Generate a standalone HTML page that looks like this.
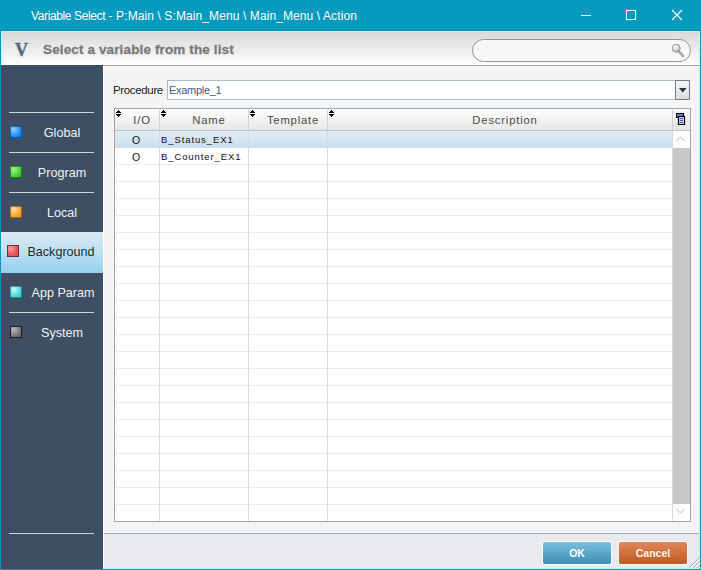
<!DOCTYPE html>
<html><head><meta charset="utf-8">
<style>
*{margin:0;padding:0;box-sizing:border-box}
html,body{width:701px;height:570px;overflow:hidden;background:#059abe;font-family:"Liberation Sans",sans-serif}
.a{position:absolute}
#title{left:0;top:0;width:701px;height:31px;background:#059abe}
#ttext{left:31px;top:9px;font-size:12px;letter-spacing:0.1px;color:#fff;white-space:pre;line-height:14px}
#win{left:1px;top:31px;width:699px;height:538px;background:#b0fbff}
#hdr{left:2px;top:32px;width:697px;height:33px;background:linear-gradient(#d9d9d9,#f9f9f9 88%,#fdfdfd)}
#hline{left:103px;top:65px;width:596px;height:1px;background:#a5a5a5}
#side{left:1px;top:65px;width:102px;height:504px;background:#3e4f63}
#content{left:103px;top:66px;width:596px;height:467px;background:#f5f5f5;border-left:1px solid #fff}
#band{left:103px;top:533px;width:596px;height:35px;border-left:1px solid #fff;background:#e9eaed;border-top:1px solid #a5adb5}
.sep{position:absolute;left:8px;width:85px;height:1px;background:#d0d6dc}
.ico{position:absolute;width:12px;height:12px}
.lbl{position:absolute;left:20px;width:82px;text-align:center;font-size:12.6px;color:#f0f2f4;white-space:pre;line-height:14px}
.dot{position:absolute;left:115px;width:557px;height:1px;background:repeating-linear-gradient(90deg,transparent 0 1px,#d6d6d6 1px 2px)}
.hsep{position:absolute;top:110px;width:1px;height:20px;background:#d0d0d0}
.bsep{position:absolute;top:131px;width:1px;height:390px;background:#dadada}
.sort{top:110px;width:5px;height:7px}
.hd{position:absolute;top:114px;padding-left:10px;font-size:11.3px;letter-spacing:0.8px;color:#4a4a4a;text-align:center;line-height:13px;white-space:pre}
.cell{position:absolute;font-size:9.5px;letter-spacing:0.9px;color:#101010;line-height:12px;white-space:pre}
.btn{position:absolute;top:542px;width:68px;height:22px;border-radius:2px;box-shadow:0 0 0 1px rgba(255,255,255,.75);font-size:10.5px;font-weight:bold;text-align:center;line-height:23px}
</style></head><body>
<div id="title" class="a"></div>
<div id="ttext" class="a"><span style="letter-spacing:-0.38px">Variable Select</span> - P:Main \ S:Main_Menu \ Main_Menu \ Action</div>
<!-- window controls -->
<div class="a" style="left:581px;top:15px;width:10px;height:1px;background:#fff"></div>
<div class="a" style="left:626px;top:10px;width:10px;height:10px;border:1px solid #fff"></div>
<svg class="a" style="left:671px;top:9px" width="12" height="12" viewBox="0 0 12 12"><path d="M1 1L11 11M11 1L1 11" stroke="#fff" stroke-width="1.1"/></svg>

<div class="a" style="left:1px;top:30px;width:699px;height:1px;background:#1688a6"></div>
<div id="win" class="a"></div>
<div id="hdr" class="a"></div>
<div class="a" style="left:15px;top:41px;font-family:'Liberation Serif',serif;font-weight:bold;font-size:18px;color:#56677e;-webkit-text-stroke:0.4px #56677e;line-height:18px">V</div>
<div class="a" style="left:43px;top:42px;font-size:13.5px;font-weight:bold;color:#7a7a7a;letter-spacing:0.13px;-webkit-text-stroke:0.3px #7a7a7a;white-space:pre;line-height:15px">Select a variable from the list</div>
<div class="a" style="left:472px;top:39px;width:219px;height:23px;border:1px solid #959595;border-radius:12px;background:#f7f7f7"></div>
<svg class="a" style="left:671px;top:43px" width="14" height="15" viewBox="0 0 14 15">
 <defs><radialGradient id="mg" cx="0.35" cy="0.3" r="0.75"><stop offset="0" stop-color="#ffffff"/><stop offset="0.6" stop-color="#d0d4d8"/><stop offset="1" stop-color="#a8a8a8"/></radialGradient></defs>
 <line x1="7.5" y1="8" x2="12" y2="12.8" stroke="#8c8c8c" stroke-width="2.4" stroke-linecap="round"/>
 <line x1="7.5" y1="8" x2="12" y2="12.8" stroke="#c8c8c8" stroke-width="1" stroke-linecap="round"/>
 <circle cx="5.2" cy="5.2" r="4" fill="url(#mg)" stroke="#909090" stroke-width="0.9"/>
</svg>
<div id="hline" class="a"></div>

<div id="side" class="a">
 <div class="sep" style="top:47px"></div>
 <div class="ico" style="left:9px;top:61px;background:radial-gradient(circle at 30% 28%,#90d0ff 0,#2090ff 55%,#0a68d0 100%);box-shadow:inset -1px -1px 0 rgba(10,50,120,.55),inset 1px 1px 0 rgba(10,50,120,.55)"></div>
 <div class="lbl" style="top:61px">Global</div>
 <div class="sep" style="top:87px"></div>
 <div class="ico" style="left:9px;top:101px;background:radial-gradient(circle at 30% 28%,#a0f880 0,#50d040 55%,#20a020 100%);box-shadow:inset -1px -1px 0 rgba(10,80,10,.6),inset 1px 1px 0 rgba(10,80,10,.6)"></div>
 <div class="lbl" style="top:101px">Program</div>
 <div class="sep" style="top:127px"></div>
 <div class="ico" style="left:9px;top:141px;background:radial-gradient(circle at 30% 28%,#ffe0a0 0,#f8a830 55%,#e08010 100%);box-shadow:inset -1px -1px 0 rgba(120,60,0,.55),inset 1px 1px 0 rgba(120,60,0,.55)"></div>
 <div class="lbl" style="top:141px">Local</div>
 <div class="a" style="left:0;top:167px;width:102px;height:41px;background:linear-gradient(#dde9f2,#bcdff1 50%,#93d1f0)"></div>
 <div class="ico" style="left:6px;top:180px;background:radial-gradient(circle at 30% 28%,#ff9a9a 0,#e05858 55%,#c84848 100%);box-shadow:inset -1px -1px 0 rgba(80,30,50,.8),inset 1px 1px 0 rgba(80,30,50,.8)"></div>
 <div class="lbl" style="top:180px;color:#1c2838;left:19px">Background</div>
 <div class="ico" style="left:9px;top:221px;background:radial-gradient(circle at 30% 28%,#c0ffff 0,#50d8d8 55%,#30b8c0 100%);box-shadow:inset -1px -1px 0 rgba(20,90,100,.55),inset 1px 1px 0 rgba(20,90,100,.55)"></div>
 <div class="lbl" style="top:221px;left:21px">App Param</div>
 <div class="sep" style="top:247px"></div>
 <div class="ico" style="left:9px;top:261px;background:radial-gradient(circle at 30% 28%,#b8bcc4 0,#787878 55%,#585858 100%);box-shadow:inset -1px -1px 0 rgba(10,15,25,.85),inset 1px 1px 0 rgba(10,15,25,.85)"></div>
 <div class="lbl" style="top:261px">System</div>
 <div class="sep" style="top:468px"></div>
</div>

<div id="content" class="a"></div>
<div id="band" class="a"></div>
<div class="a" style="left:104px;top:532px;width:595px;height:1px;background:#f3f8fc"></div>
<!-- procedure -->
<div class="a" style="left:113px;top:84px;font-size:11.5px;letter-spacing:-0.35px;color:#202020;white-space:pre;line-height:13px">Procedure</div>
<div class="a" style="left:167px;top:80px;width:523px;height:20px;border:1px solid #a9bccb;background:#fff"></div>
<div class="a" style="left:169px;top:84px;font-size:11px;letter-spacing:-0.3px;color:#3a5a8c;white-space:pre;line-height:13px">Example_1</div>
<div class="a" style="left:675px;top:80px;width:15px;height:20px;border:1px solid #6e7c88;border-radius:1px;background:linear-gradient(#f6f4f4,#dcdcdc)"></div>
<svg class="a" style="left:679px;top:88px" width="8" height="5" viewBox="0 0 8 5"><path d="M0 0H7.5L3.75 4.5Z" fill="#1d3550"/></svg>

<!-- grid -->
<div class="a" style="left:114px;top:108px;width:577px;height:414px;border:1px solid #a4a4a4;background:#fff"></div>
<div class="a" style="left:115px;top:109px;width:558px;height:22px;background:linear-gradient(#ffffff,#f3f3f3 50%,#e6e6e6);border-bottom:1px solid #b8c4ce"></div>
<div class="a" style="left:673px;top:109px;width:17px;height:22px;background:linear-gradient(#fafafa,#e4e4e4);border-bottom:1px solid #c8c8c8"></div>
<div class="hsep" style="left:159px"></div>
<div class="hsep" style="left:248px"></div>
<div class="hsep" style="left:327px"></div>
<div class="hsep" style="left:672px"></div>
<svg class="a sort" style="left:116px"><use href="#srt"/></svg>
<svg class="a sort" style="left:161px"><use href="#srt"/></svg>
<svg class="a sort" style="left:250px"><use href="#srt"/></svg>
<svg class="a sort" style="left:329px"><use href="#srt"/></svg>
<div class="hd" style="left:115px;width:44px">I/O</div>
<div class="hd" style="left:160px;width:88px">Name</div>
<div class="hd" style="left:249px;width:78px">Template</div>
<div class="hd" style="left:328px;width:344px">Description</div>
<!-- chooser icon -->
<svg class="a" style="left:676px;top:113px" width="10" height="13" viewBox="0 0 10 13">
 <path d="M0.5 0.5H7.5V4.5H0.5Z" fill="#6878e0" stroke="#05050a" stroke-width="1.2"/>
 <path d="M2.5 3.5H8.5V11.5H2.5Z" fill="#c8d0f8" stroke="#05050a" stroke-width="1.2"/>
 <path d="M4 5.5H7M4 7.5H7M4 9.5H7" stroke="#4858c0" stroke-width="1"/>
</svg>
<!-- selected row -->
<div class="a" style="left:115px;top:131px;width:557px;height:17px;background:linear-gradient(#dfecf5,#c9dfee)"></div>
<div class="bsep" style="left:159px"></div>
<div class="bsep" style="left:248px"></div>
<div class="bsep" style="left:327px"></div>
<div class="bsep" style="left:672px"></div>
<div class="dot" style="top:164px"></div>
<div class="dot" style="top:181px"></div>
<div class="dot" style="top:198px"></div>
<div class="dot" style="top:215px"></div>
<div class="dot" style="top:232px"></div>
<div class="dot" style="top:249px"></div>
<div class="dot" style="top:266px"></div>
<div class="dot" style="top:283px"></div>
<div class="dot" style="top:300px"></div>
<div class="dot" style="top:317px"></div>
<div class="dot" style="top:334px"></div>
<div class="dot" style="top:351px"></div>
<div class="dot" style="top:368px"></div>
<div class="dot" style="top:385px"></div>
<div class="dot" style="top:402px"></div>
<div class="dot" style="top:419px"></div>
<div class="dot" style="top:436px"></div>
<div class="dot" style="top:453px"></div>
<div class="dot" style="top:470px"></div>
<div class="dot" style="top:487px"></div>
<div class="dot" style="top:504px"></div>
<div class="cell" style="left:114px;top:134px;width:44px;text-align:center;font-size:10.5px;letter-spacing:0">O</div>
<div class="cell" style="left:161px;top:134px">B_Status_EX1</div>
<div class="cell" style="left:114px;top:151px;width:44px;text-align:center;font-size:10.5px;letter-spacing:0">O</div>
<div class="cell" style="left:161px;top:151px">B_Counter_EX1</div>
<!-- scrollbar -->
<div class="a" style="left:673px;top:148px;width:17px;height:356px;background:#c8c8c8"></div>
<svg class="a" style="left:675px;top:136px" width="11" height="7" viewBox="0 0 11 7"><path d="M1.5 5L5.5 1L9.5 5" fill="none" stroke="#d8d8d8" stroke-width="1.5"/></svg>
<svg class="a" style="left:675px;top:508px" width="11" height="7" viewBox="0 0 11 7"><path d="M1.5 1L5.5 5L9.5 1" fill="none" stroke="#d8d8d8" stroke-width="1.5"/></svg>

<!-- buttons -->
<div class="btn" style="left:543px;background:linear-gradient(#7cc2dd,#3b8db4);color:#fff">OK</div>
<div class="btn" style="left:619px;background:linear-gradient(#e2865c,#bf5a22);color:#fff6e6">Cancel</div>
<svg class="a" style="left:688px;top:556px" width="13" height="13" viewBox="0 0 13 13">
 <path d="M12 2.5L2.5 12M12 6.5L6.5 12M12 10.5L10.5 12" stroke="#ffffff" stroke-width="1.1"/>
 <path d="M12 1.2L1.2 12M12 5.2L5.2 12M12 9.2L9.2 12" stroke="#9a9a9a" stroke-width="1"/>
</svg>
<svg width="0" height="0" style="position:absolute"><defs><g id="srt"><path d="M2 0h1v1h1v1h1v1h-5v-1h1v-1h1z M0 4h5v1h-1v1h-1v1h-1v-1h-1v-1h-1z" fill="#000" shape-rendering="crispEdges"/></g></defs></svg>

</body></html>
